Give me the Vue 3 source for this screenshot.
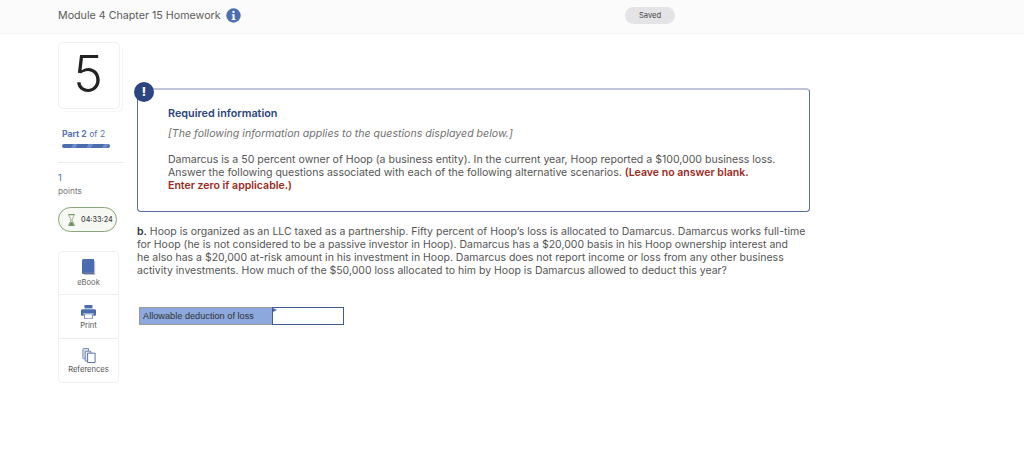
<template>
  <div class="page">
    <header class="topbar">
      <div class="title">
        <span>Module 4 Chapter 15 Homework</span>
        <svg class="info" width="15" height="15" viewBox="0 0 15 15">
          <circle cx="7.5" cy="7.5" r="7.2" fill="#4c6eb3" />
          <circle cx="7.5" cy="3.9" r="1.2" fill="#fff" />
          <path d="M5.8 6.2h2.8v4.7h1v1.1H5.6v-1.1h1V7.3h-.8z" fill="#fff" />
        </svg>
      </div>
      <div class="saved">Saved</div>
    </header>
    <div class="body">
      <aside class="side">
        <div class="qnum"><span>5</span></div>
        <div class="part"><b>Part 2</b> of 2</div>
        <div class="progress"></div>
        <div class="rule"></div>
        <div class="pts"><div class="n">1</div><div class="l">points</div></div>
        <div class="timer">
          <svg width="9" height="14" viewBox="0 0 11 15">
            <path d="M1.5 1h8M1.5 14h8" stroke="#7f9d70" stroke-width="1.4" fill="none" />
            <path d="M2.5 1.5c0 3 2.4 4 2.4 6s-2.4 3-2.4 6M8.5 1.5c0 3-2.4 4-2.4 6s2.4 3 2.4 6" stroke="#7f9d70" stroke-width="1" fill="none" />
            <path d="M2.8 13.5c.3-2.6 1.6-3.4 2.7-4 1.1.6 2.4 1.4 2.7 4z" fill="#6f9160" />
          </svg>
          <span>04:33:24</span>
        </div>
        <div class="tools">
          <div class="tool">
            <svg width="15" height="16" viewBox="0 0 15 16">
              <path d="M13 2h1.2v14H3v-1h10z" fill="#b9bfd0" />
              <path d="M1 14V1.6C1 .8 1.6 0 2.5 0H13v13.6H2.6c-.8 0-1.3.2-1.6.7z" fill="#4c6cb0" />
              <path d="M1 14.6c0-.7.6-1 1.6-1H13v1.2H2.2z" fill="#27407c" />
            </svg>
            <span>eBook</span>
          </div>
          <div class="tool">
            <svg width="15" height="14" viewBox="0 0 15 14">
              <path d="M3.5 0h8v3.4h-8z" fill="#4c6cb0" />
              <path d="M1.4 4.2h12.2c.8 0 1.4.6 1.4 1.4v4.2c0 .5-.4.9-.9.9h-1.8V8H2.7v2.7H.9c-.5 0-.9-.4-.9-.9V5.6c0-.8.6-1.4 1.4-1.4z" fill="#4c6cb0" />
              <path d="M3.6 8.8h7.8v5H3.6z" fill="#fff" stroke="#4c6cb0" stroke-width=".8" />
            </svg>
            <span class="dark">Print</span>
          </div>
          <div class="tool">
            <svg width="14" height="15" viewBox="0 0 14 16">
              <path d="M.5 1.5a1 1 0 0 1 1-1h5v11h-5a1 1 0 0 1-1-1z" fill="#d7dcea" stroke="#6f85b8" />
              <path d="M3 3.5h6v10.5H3z" fill="#e6e9f2" stroke="#6f85b8" />
              <path d="M5.5 5.5h8v10h-8z" fill="#fff" stroke="#4c6cb0" />
            </svg>
            <span class="dark">References</span>
          </div>
        </div>
      </aside>
      <main class="content">
        <section class="alert">
          <div class="badge">!</div>
          <h3>Required information</h3>
          <p class="note">[The following information applies to the questions displayed below.]</p>
          <p class="text">
            Damarcus is a 50 percent owner of Hoop (a business entity). In the current year, Hoop reported a $100,000 business loss.<br />
            Answer the following questions associated with each of the following alternative scenarios.
            <strong>(Leave no answer blank.<br />Enter zero if applicable.)</strong>
          </p>
        </section>
        <p class="question">
          <b>b.</b> Hoop is organized as an LLC taxed as a partnership. Fifty percent of Hoop’s loss is allocated to Damarcus. Damarcus works full-time<br />
          for Hoop (he is not considered to be a passive investor in Hoop). Damarcus has a $20,000 basis in his Hoop ownership interest and<br />
          he also has a $20,000 at-risk amount in his investment in Hoop. Damarcus does not report income or loss from any other business<br />
          activity investments. How much of the $50,000 loss allocated to him by Hoop is Damarcus allowed to deduct this year?
        </p>
        <div class="answer">
          <div class="label">Allowable deduction of loss</div>
          <div class="field"><i class="flag"></i></div>
        </div>
      </main>
    </div>
  </div>
</template>

<script setup>
</script>

<style>
html, body { margin: 0; background: #fff; }
</style>

<style scoped>
.page { width: 1024px; height: 464px; overflow: hidden; font-family: Inter, "Liberation Sans", sans-serif; color: #555; }
.topbar { height: 34px; box-sizing: border-box; background: #fbfbfb; border-bottom: 1px solid #f5f5f5; padding: 0 0 3px 58px; display: flex; align-items: center; }
.title { display: flex; align-items: center; gap: 5px; font-size: 10.7px; color: #5a5a5a; width: 567px; }
.info { flex: none; }
.saved { width: 50px; height: 17px; border-radius: 9px; background: #e4e3e5; font-size: 7.6px; line-height: 17px; text-align: center; color: #444; }
.body { display: flex; padding: 8px 0 0 58px; }
.side { width: 62px; flex: none; }
.qnum { width: 60px; height: 65px; border: 1px solid #f0f0f0; border-radius: 5px; display: flex; align-items: center; justify-content: center; box-shadow: 2px 2px 0 #fff, 3px 3px 0 #f4f4f4; }
.qnum span { font-size: 50px; line-height: 1; font-weight: 300; color: #222; margin: -3px 2px 0 0; }
.part { margin-top: 19px; margin-left: 4px; font-size: 8.6px; line-height: 12px; color: #5674b5; }
.part b { font-weight: 700; }
.progress { margin: 4px 0 0 4px; width: 48px; height: 4px; border-radius: 2px; background: repeating-linear-gradient(115deg, #4c6cb0 0 10px, #6e8ac4 10px 14px); }
.rule { margin-top: 14px; width: 66px; height: 1px; background: #ececec; }
.pts { margin-top: 9px; font-size: 8.3px; line-height: 12px; }
.pts .n { color: #4c6cb0; font-size: 9px; }
.pts .l { color: #777; margin-top: 1px; }
.timer { margin-top: 10px; width: 59px; height: 25px; box-sizing: border-box; border: 1px solid #8aa577; border-radius: 12.5px; background: #f6f8f3; display: flex; align-items: center; gap: 5px; padding-left: 8px; font-size: 7.2px; font-weight: 500; color: #444; }
.tools { margin-top: 19px; width: 59px; border: 1px solid #f0f0f0; border-radius: 4px; }
.tool { height: 44px; display: flex; flex-direction: column; align-items: center; padding-top: 10px; box-sizing: border-box; gap: 2px; font-size: 7.6px; line-height: 9px; color: #666; border-bottom: 1px solid #eee; }
.tool:first-child { height: 43px; padding-top: 7px; gap: 3px; }
.tool:last-child { height: 43px; border-bottom: 0; padding-top: 9px; }
.tool .dark { color: #555; }
.content { margin-left: 17px; width: 673px; padding-top: 46px; }
.alert { position: relative; box-sizing: border-box; width: 673px; height: 124px; border: 1px solid #5a6b9d; border-top: 2px solid #c0c4d8; border-radius: 4px; padding: 17px 30px 0; }
.badge { position: absolute; left: -4px; top: -8px; width: 20px; height: 20px; border-radius: 50%; background: #2b4582; color: #fff; font-weight: 800; font-size: 12px; line-height: 20px; text-align: center; }
h3 { margin: 0; font-size: 10.8px; line-height: 13px; color: #2b4582; font-weight: 600; }
.note { margin: 7px 0 0; font-size: 10.6px; line-height: 13px; font-style: italic; color: #707070; }
.text { margin: 13px 0 0; font-size: 10.55px; line-height: 13px; color: #555; }
.text strong { color: #9c2a1c; font-weight: 600; }
.question { margin: 13px 0 0; font-size: 10.5px; line-height: 13px; width: 680px; color: #555; }
.question b { color: #333; font-weight: 600; }
.answer { margin: 30px 0 0 2px; display: flex; width: 205px; height: 18px; }
.label { width: 133px; box-sizing: border-box; background: #8ca8dc; border: 1px solid #9a9a9a; border-right: 0; font-family: "Liberation Sans", sans-serif; font-size: 9.2px; line-height: 16px; padding-left: 3px; color: #333; }
.field { position: relative; flex: 1; border: 1px solid #3f5a94; background: #fff; box-sizing: border-box; }
.flag { position: absolute; left: 0; top: 0; border-left: 4px solid #4c6cb0; border-top: 2px solid transparent; border-bottom: 2px solid transparent; }
</style>
